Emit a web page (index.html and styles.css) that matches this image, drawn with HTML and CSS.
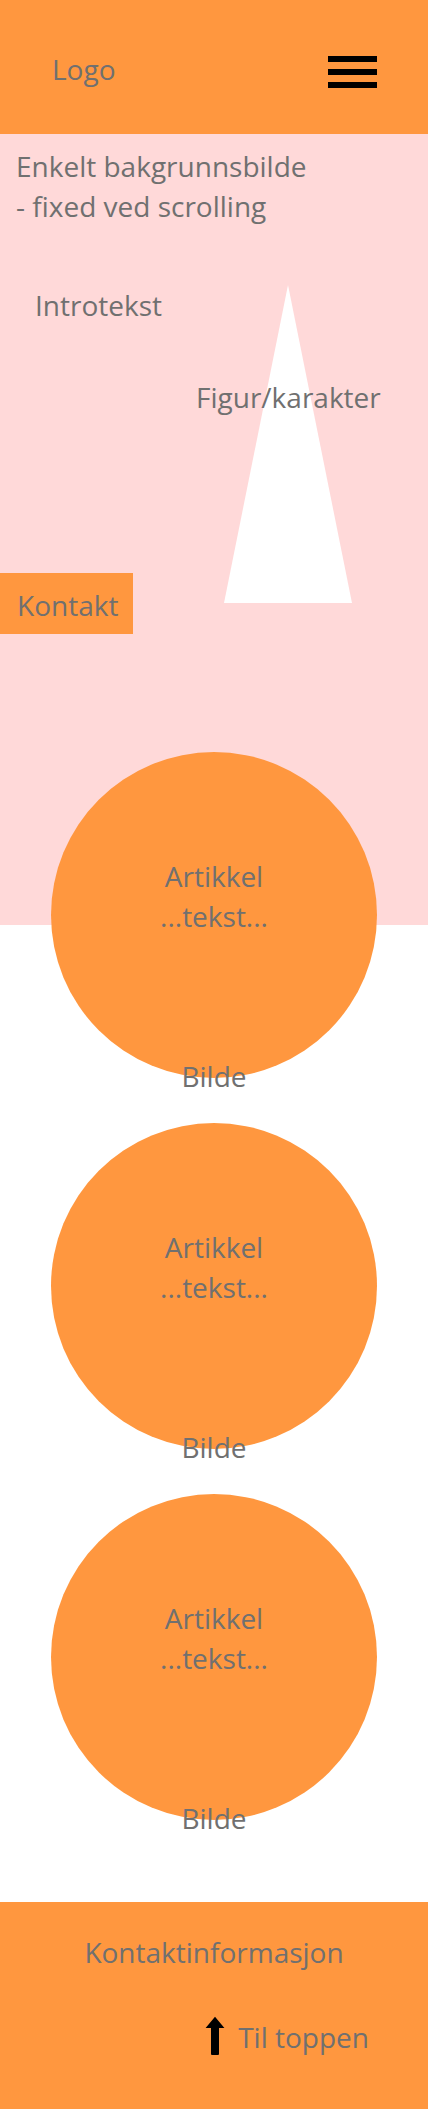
FILE: index.html
```html
<!DOCTYPE html>
<html lang="no">
<head>
<meta charset="utf-8">
<title>Skisse</title>
<link rel="stylesheet" href="styles.css">
</head>
<body>
<header class="site-header">
  <div class="logo">Logo</div>
  <button class="menu" aria-label="Meny"><span></span><span></span><span></span></button>
</header>
<section class="hero">
  <p class="hero-title">Enkelt bakgrunnsbilde<br>- fixed ved scrolling</p>
  <div class="hero-row">
    <div class="hero-left">
      <p class="intro">Introtekst</p>
      <a class="contact-btn" href="#">Kontakt</a>
    </div>
    <div class="figure">
      <svg class="triangle" width="128" height="318" viewBox="0 0 128 318" aria-hidden="true">
        <polygon points="64,0 128,318 0,318" fill="#fff"/>
      </svg>
      <span class="figure-label">Figur/karakter</span>
    </div>
  </div>
</section>
<main class="articles">
  <article class="article">
    <div class="circle"><p>Artikkel<br>...tekst...</p></div>
    <p class="caption">Bilde</p>
  </article>
  <article class="article">
    <div class="circle"><p>Artikkel<br>...tekst...</p></div>
    <p class="caption">Bilde</p>
  </article>
  <article class="article">
    <div class="circle"><p>Artikkel<br>...tekst...</p></div>
    <p class="caption">Bilde</p>
  </article>
</main>
<footer class="site-footer">
  <p class="contact-info">Kontaktinformasjon</p>
  <a class="to-top" href="#">
    <svg class="arrow" width="20" height="39" viewBox="0 0 20 39" aria-hidden="true">
      <path d="M10 0.8 L19.4 12 L14 12 L14 38 Q14 39 13 39 L7 39 Q6 39 6 38 L6 12 L0.6 12 Z" fill="#000"/>
    </svg>
    <span>Til toppen</span>
  </a>
</footer>
</body>
</html>
```
FILE: styles.css
```css
* { box-sizing: border-box; }
html, body {
  margin: 0;
  padding: 0;
}
body {
  font-family: "Open Sans", "Noto Sans", sans-serif;
  font-size: 28px;
  line-height: 40px;
  color: #707070;
  background: #fff;
}
p { margin: 0; }
a { color: inherit; text-decoration: none; }

.site-header {
  height: 134px;
  background: #ff973f;
  display: flex;
  justify-content: space-between;
  align-items: flex-start;
  padding: 49px 51px 0 52px;
}
.menu {
  margin-top: 7px;
  width: 49px;
  padding: 0;
  border: 0;
  background: none;
  display: flex;
  flex-direction: column;
  gap: 7px;
}
.menu span {
  display: block;
  height: 6px;
  background: #000;
}

.hero {
  height: 618px;
  background: #ffd9d9;
  padding-top: 12px;
}
.hero-title {
  padding-left: 16px;
}
.hero-row {
  margin-top: 59px;
  height: 349px;
  display: flex;
  align-items: flex-start;
}
.hero-left {
  flex: 0 0 196px;
  align-self: stretch;
  display: flex;
  flex-direction: column;
}
.intro {
  padding-left: 35px;
}
.contact-btn {
  margin-top: auto;
  align-self: flex-start;
  width: 133px;
  height: 61px;
  background: #ff973f;
  padding: 12px 0 0 17px;
}
.figure {
  width: 184px;
  display: grid;
}
.triangle,
.figure-label {
  grid-area: 1 / 1;
}
.triangle {
  display: block;
  justify-self: center;
}
.figure-label {
  margin-top: 92px;
  align-self: start;
  justify-self: center;
  white-space: nowrap;
}

.articles {
  background: linear-gradient(#ffd9d9 0, #ffd9d9 173px, #fff 173px);
  padding-bottom: 64px;
  display: flex;
  flex-direction: column;
  align-items: center;
  gap: 27px;
}
.article {
  display: flex;
  flex-direction: column;
  align-items: center;
}
.circle {
  width: 326px;
  height: 326px;
  border-radius: 50%;
  background: #ff973f;
  padding-top: 104px;
  text-align: center;
}
.caption {
  margin-top: -22px;
  text-align: center;
}

.site-footer {
  background: #ff973f;
  padding: 30px 0 52px;
}
.contact-info {
  text-align: center;
}
.to-top {
  margin-top: 45px;
  display: flex;
  justify-content: flex-end;
  align-items: flex-start;
  gap: 13px;
  padding-right: 59px;
}
.arrow {
  margin-top: -1px;
  display: block;
}
```
